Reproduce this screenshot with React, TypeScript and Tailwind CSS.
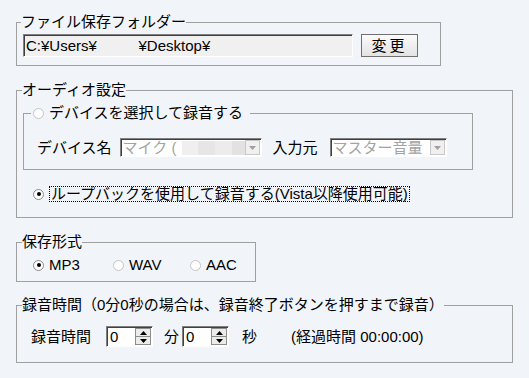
import React from 'react';

function Radio({ checked }: { checked?: boolean }) {
    return (
        <span
            className={
                "inline-flex h-[11px] w-[11px] shrink-0 items-center justify-center rounded-full border bg-white " +
                (checked ? "border-[#8a8a8a]" : "border-[#c4c4c4]")
            }
        >
            {checked && <span className="h-[4px] w-[4px] rounded-full bg-black" />}
        </span>
    );
}

function DownArrow({ color }: { color: string }) {
    return (
        <svg width="7" height="4" viewBox="0 0 7 4">
            <path d="M0 0 H7 L3.5 4 Z" fill={color} />
        </svg>
    );
}

function UpArrow() {
    return (
        <svg width="7" height="4" viewBox="0 0 7 4">
            <path d="M0 4 H7 L3.5 0 Z" fill="#000" />
        </svg>
    );
}

function DisabledSelect({ width, children }: { width: string; children: React.ReactNode }) {
    return (
        <div
            className={
                width +
                " flex h-[19px] items-stretch border-t border-l border-t-[#808080] border-l-[#808080] border-r border-b border-r-white border-b-white bg-white shadow-[inset_1px_1px_0_#404040]"
            }
        >
            <div className="flex flex-1 items-center overflow-hidden whitespace-nowrap pl-[2px] pt-[1px] text-[#a3a3a3] leading-[16px]">
                {children}
            </div>
            <div className="my-[1px] mr-[1px] flex w-[15px] items-center justify-center border border-[#c8c8c8] bg-[#f0f0f0]">
                <DownArrow color="#a0a0a0" />
            </div>
        </div>
    );
}

function Spinner() {
    return (
        <div className="flex h-[21px] w-[47px] items-stretch border-t border-l border-t-[#808080] border-l-[#808080] border-r border-b border-r-white border-b-white bg-white shadow-[inset_1px_1px_0_#404040]">
            <div className="flex flex-1 items-center pl-[3px] pt-[1px] leading-[16px]">0</div>
            <div className="my-[1px] mr-[1px] flex w-[16px] flex-col">
                <div className="flex flex-1 items-center justify-center border border-[#8c8c8c] bg-[#ececec]">
                    <UpArrow />
                </div>
                <div className="flex flex-1 items-center justify-center border border-t-0 border-[#8c8c8c] bg-[#ececec]">
                    <DownArrow color="#000" />
                </div>
            </div>
        </div>
    );
}

export default function App() {
    return (
        <div className="h-[378px] w-[529px] overflow-hidden bg-[#f1f5f9] pl-[16px] pt-[14px] font-['Liberation_Sans','Noto_Sans_CJK_JP',sans-serif] text-[15px] text-black">
            {/* ファイル保存フォルダー */}
            <fieldset className="m-0 w-[425px] border border-[#a0a0a0] p-0">
                <legend className="ml-[4px] px-0 leading-[16px]">ファイル保存フォルダー</legend>
                <div className="flex gap-[8px] pb-[8px] pl-[6px] pt-[4px]">
                    <div className="flex h-[23px] w-[330px] items-center border-t border-l border-t-[#808080] border-l-[#808080] border-r border-b border-r-white border-b-white bg-[#f0f0f0] pl-[2px] whitespace-pre leading-[16px] shadow-[inset_1px_1px_0_#404040]">
                        {"C:¥Users¥          ¥Desktop¥"}
                    </div>
                    <button className="flex h-[23px] w-[57px] items-center justify-center border border-[#707070] bg-gradient-to-b from-[#fbfbfb] to-[#e3e3e3] tracking-[3px] leading-[16px]">
                        変更
                    </button>
                </div>
            </fieldset>

            {/* オーディオ設定 */}
            <fieldset className="m-0 mt-[16px] w-[497px] border border-[#a0a0a0] p-0">
                <legend className="ml-[5px] px-0 leading-[16px]">オーディオ設定</legend>
                <div className="pb-[15px] pl-[6px] pt-[7px]">
                    <fieldset className="m-0 w-[450px] border border-[#a0a0a0] p-0">
                        <legend className="ml-[7px] flex items-center gap-[5px] pl-[2px] pr-[7px] leading-[16px]">
                            <Radio />
                            <span>デバイスを選択して録音する</span>
                        </legend>
                        <div className="flex items-center pb-[12px] pl-[13px] pt-[17px]">
                            <span className="leading-[16px]">デバイス名</span>
                            <div className="ml-[8px]">
                                <DisabledSelect width="w-[142px]">
                                    <span>マイク (</span>
                                    <span className="ml-[6px] inline-block h-[14px] w-[18px] bg-[#efefef]" />
                                    <span className="inline-block h-[14px] w-[20px] bg-[#e6e6e6]" />
                                    <span className="inline-block h-[14px] w-[20px] bg-[#ececec]" />
                                    <span className="inline-block h-[14px] w-[14px] bg-[#e2e2e2]" />
                                </DisabledSelect>
                            </div>
                            <span className="ml-[11px] leading-[16px]">入力元</span>
                            <div className="ml-[12px]">
                                <DisabledSelect width="w-[117px]">マスター音量</DisabledSelect>
                            </div>
                        </div>
                    </fieldset>
                    <div className="mt-[16px] flex items-center pl-[10px]">
                        <Radio checked />
                        <span className="ml-[5px] border border-dotted border-black px-[1px] leading-[14px]">
                            ループバックを使用して録音する(Vista以降使用可能)
                        </span>
                    </div>
                </div>
            </fieldset>

            {/* 保存形式 */}
            <fieldset className="m-0 mt-[16px] w-[240px] border border-[#a0a0a0] p-0">
                <legend className="ml-[5px] px-0 leading-[16px]">保存形式</legend>
                <div className="flex items-center pb-[8px] pl-[16px] pt-[7px] leading-[16px]">
                    <div className="flex w-[80px] items-center gap-[5px]">
                        <Radio checked />
                        <span>MP3</span>
                    </div>
                    <div className="flex w-[77px] items-center gap-[5px]">
                        <Radio />
                        <span>WAV</span>
                    </div>
                    <div className="flex items-center gap-[5px]">
                        <Radio />
                        <span>AAC</span>
                    </div>
                </div>
            </fieldset>

            {/* 録音時間 */}
            <fieldset className="m-0 mt-[15px] w-[497px] border border-[#a0a0a0] p-0">
                <legend className="ml-[5px] px-0 leading-[16px]">録音時間（0分0秒の場合は、録音終了ボタンを押すまで録音）</legend>
                <div className="flex items-center pb-[15px] pl-[14px] pt-[13px] leading-[16px]">
                    <span>録音時間</span>
                    <div className="ml-[15px]">
                        <Spinner />
                    </div>
                    <span className="ml-[11px]">分</span>
                    <div className="ml-[3px]">
                        <Spinner />
                    </div>
                    <span className="ml-[13px]">秒</span>
                    <span className="ml-[34px]">(経過時間 00:00:00)</span>
                </div>
            </fieldset>
        </div>
    );
}
